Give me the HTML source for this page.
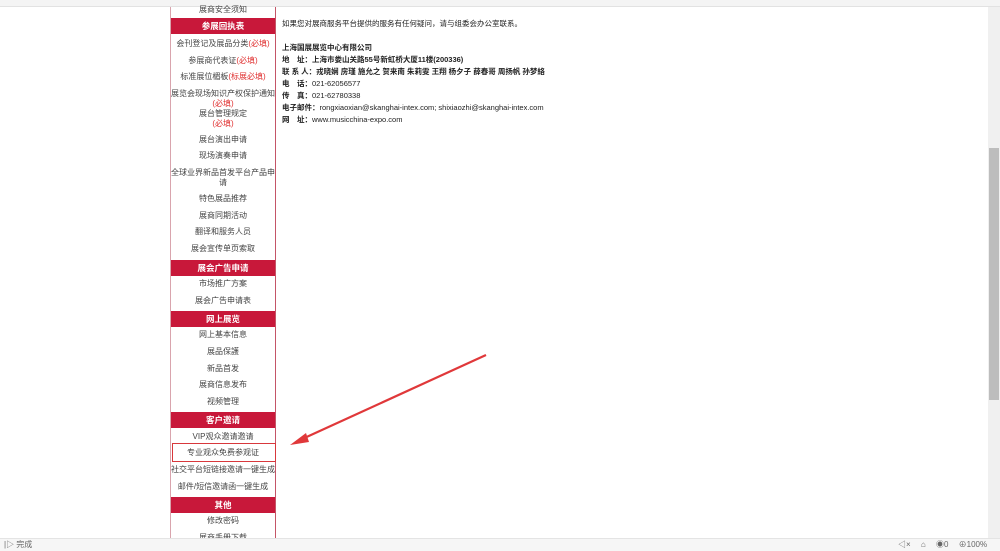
<!DOCTYPE html>
<html><head><meta charset="utf-8"><style>
*{margin:0;padding:0;box-sizing:border-box}
body{width:1000px;height:551px;overflow:hidden;background:#fff;position:relative;font-family:"Liberation Sans","Noto Sans CJK SC",sans-serif;color:#333}
.top{position:absolute;left:0;top:0;width:1000px;height:7px;background:#f4f4f4;border-bottom:1px solid #e2e2e2}
.side{position:absolute;left:170px;top:7px;width:106px;height:531px;border-left:1px solid #d9a4ad;border-right:1px solid #c45567}
.i{position:absolute;left:0;width:104px;text-align:center;font-size:8px;line-height:10px;color:#444;white-space:nowrap}
.h{position:absolute;left:0;width:104px;height:16px;background:#c8183a;color:#fff;font-weight:bold;font-size:8.5px;line-height:16px;text-align:center}
.r{color:#e03030}
.m{position:absolute;left:282px;font-size:7.5px;line-height:10px;color:#222;white-space:nowrap}
.b{font-weight:bold}
.sb{position:absolute;left:988px;top:7px;width:12px;height:531px;background:#f0f0f0}
.th{position:absolute;left:989px;top:148px;width:10px;height:252px;background:#bdbdbd}
.st{position:absolute;left:0;top:538px;width:1000px;height:13px;background:#f6f6f6;border-top:1px solid #e4e4e4;font-size:8px;line-height:12px;color:#666}
</style></head><body>
<div class="top"></div>
<div class="side">
<div class="i" style="top:-2px">展商安全须知</div>
<div class="h" style="top:11px">参展回执表</div>
<div class="i" style="top:32px">会刊登记及展品分类<span class="r">(必填)</span></div>
<div class="i" style="top:49px">参展商代表证<span class="r">(必填)</span></div>
<div class="i" style="top:65px">标准展位楣板<span class="r">(标展必填)</span></div>
<div class="i" style="top:82px">展览会现场知识产权保护通知</div>
<div class="i" style="top:92px"><span class="r">(必填)</span></div>
<div class="i" style="top:102px">展台管理规定</div>
<div class="i" style="top:112px"><span class="r">(必填)</span></div>
<div class="i" style="top:128px">展台演出申请</div>
<div class="i" style="top:144px">现场演奏申请</div>
<div class="i" style="top:161px">全球业界新品首发平台产品申</div>
<div class="i" style="top:171px">请</div>
<div class="i" style="top:187px">特色展品推荐</div>
<div class="i" style="top:204px">展商同期活动</div>
<div class="i" style="top:220px">翻译和服务人员</div>
<div class="i" style="top:237px">展会宣传单页索取</div>
<div class="h" style="top:253px">展会广告申请</div>
<div class="i" style="top:272px">市场推广方案</div>
<div class="i" style="top:289px">展会广告申请表</div>
<div class="h" style="top:304px">网上展览</div>
<div class="i" style="top:323px">网上基本信息</div>
<div class="i" style="top:340px">展品保護</div>
<div class="i" style="top:357px">新品首发</div>
<div class="i" style="top:373px">展商信息发布</div>
<div class="i" style="top:390px">视频管理</div>
<div class="h" style="top:405px">客户邀请</div>
<div class="i" style="top:425px">VIP观众邀请邀请</div>
<div class="i" style="top:441px">专业观众免费参观证</div>
<div class="i" style="top:458px">社交平台短链接邀请一键生成</div>
<div class="i" style="top:475px">邮件/短信邀请函一键生成</div>
<div class="h" style="top:490px">其他</div>
<div class="i" style="top:509px">修改密码</div>
<div class="i" style="top:526px">展商手册下载</div>
</div>
<div style="position:absolute;left:172px;top:443px;width:104px;height:19px;border:1.5px solid #d8383c"></div>
<div class="m" style="top:19px">如果您对展商服务平台提供的服务有任何疑问，请与组委会办公室联系。</div>
<div class="m b" style="top:43px">上海国展展览中心有限公司</div>
<div class="m" style="top:55px"><b>地　址：上海市娄山关路55号新虹桥大厦11楼(200336)</b></div>
<div class="m" style="top:67px"><b>联 系 人：戎晓娴 房瑾 施允之 贺来南 朱莉雯 王翔 杨夕子 薛春哥 周扬帆 孙梦絡</b></div>
<div class="m" style="top:79px"><b>电　话：</b>021-62056577</div>
<div class="m" style="top:91px"><b>传　真：</b>021-62780338</div>
<div class="m" style="top:103px"><b>电子邮件：</b>rongxiaoxian@skanghai-intex.com; shixiaozhi@skanghai-intex.com</div>
<div class="m" style="top:115px"><b>网　址：</b>www.musicchina-expo.com</div>
<svg style="position:absolute;left:0;top:0" width="1000" height="551">
<line x1="486" y1="355" x2="300" y2="440" stroke="#e0383a" stroke-width="2.2"/>
<polygon points="290,445 306,433 309,442" fill="#e0383a"/>
</svg>
<div class="sb"></div><div class="th"></div>
<div class="st"><span style="position:absolute;left:4px">|▷ 完成</span><span style="position:absolute;left:898px">◁× 　⌂ 　◉0 　⊕100%</span></div>
</body></html>
